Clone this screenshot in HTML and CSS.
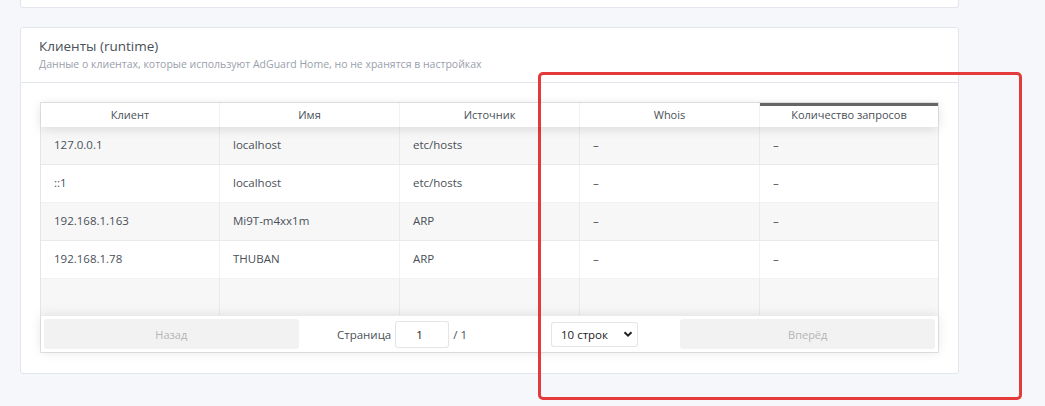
FILE: index.html
```html
<!DOCTYPE html>
<html lang="ru">
<head>
<meta charset="utf-8">
<title>Клиенты (runtime)</title>
<link rel="stylesheet" href="styles.css">
</head>
<body>
<div class="page">
  <div class="card card-top"></div>
  <div class="card">
    <div class="card-header">
      <div class="card-title">Клиенты (runtime)</div>
      <div class="card-subtitle">Данные о клиентах, которые используют AdGuard Home, но не хранятся в настройках</div>
    </div>
    <div class="card-body">
      <div class="rt">
        <div class="rt-thead">
          <div class="th">Клиент</div>
          <div class="th">Имя</div>
          <div class="th">Источник</div>
          <div class="th">Whois</div>
          <div class="th sorted">Количество запросов</div>
        </div>
        <div class="rt-tbody">
          <div class="tr odd"><div class="td">127.0.0.1</div><div class="td">localhost</div><div class="td">etc/hosts</div><div class="td">–</div><div class="td">–</div></div>
          <div class="tr"><div class="td">::1</div><div class="td">localhost</div><div class="td">etc/hosts</div><div class="td">–</div><div class="td">–</div></div>
          <div class="tr odd"><div class="td">192.168.1.163</div><div class="td">Mi9T-m4xx1m</div><div class="td">ARP</div><div class="td">–</div><div class="td">–</div></div>
          <div class="tr"><div class="td">192.168.1.78</div><div class="td">THUBAN</div><div class="td">ARP</div><div class="td">–</div><div class="td">–</div></div>
          <div class="tr odd pad"><div class="td"></div><div class="td"></div><div class="td"></div><div class="td"></div><div class="td"></div></div>
        </div>
        <div class="pagination">
          <div class="pg-side"><button class="pg-btn" disabled>Назад</button></div>
          <div class="pg-center">
            <span class="pg-info">Страница <span class="pg-input">1</span> / 1</span>
            <span class="pg-select">10 строк <svg class="chev" viewBox="0 0 10 10" width="10" height="10"><path d="M1.5 3.2 L5 6.7 L8.5 3.2" fill="none" stroke="#222" stroke-width="2"/></svg></span>
          </div>
          <div class="pg-side"><button class="pg-btn" disabled>Вперёд</button></div>
        </div>
      </div>
    </div>
  </div>
</div>
<div class="highlight"></div>
</body>
</html>
```

FILE: styles.css
```css
html, body {
  margin: 0;
  padding: 0;
}
body {
  background: #f5f7fb;
  font-family: "Open Sans", "Noto Sans", sans-serif;
  color: #495057;
  width: 1045px;
  height: 406px;
  overflow: hidden;
  position: relative;
}
.page {
  width: 939px;
  margin-left: 20px;
  display: flex;
  flex-direction: column;
  gap: 19px;
}
.card {
  background: #fff;
  border: 1px solid #e3e6ec;
  border-radius: 3px;
  box-sizing: border-box;
}
.card-top {
  height: 8px;
  border-top: none;
  border-radius: 0 0 3px 3px;
}
.card-header {
  height: 55px;
  box-sizing: border-box;
  padding: 9px 18px 0;
  border-bottom: 1px solid #e3e6ec;
}
.card-title {
  font-size: 13.5px;
  line-height: 18px;
  color: #495057;
}
.card-subtitle {
  font-size: 10.5px;
  line-height: 16px;
  color: #9aa0ac;
  margin-top: 1px;
}
.card-body {
  padding: 19px 19px 20px;
}
.rt {
  border: 1px solid rgba(0,0,0,0.1);
  display: flex;
  flex-direction: column;
}
.rt-thead, .tr {
  display: grid;
  grid-template-columns: 179px 180px 180px 180px 1fr;
}
.rt-thead {
  height: 24px;
  box-shadow: 0 2px 12px 0 rgba(0,0,0,0.12);
  position: relative;
  z-index: 1;
}
.th {
  font-size: 11px;
  line-height: 24px;
  text-align: center;
  color: #495057;
  border-right: 1px solid rgba(0,0,0,0.05);
}
.th:last-child { border-right: none; }
.th.sorted {
  box-shadow: inset 0 3px 0 0 rgba(0,0,0,0.6);
}
.tr {
  height: 38px;
  border-bottom: 1px solid rgba(0,0,0,0.05);
  box-sizing: border-box;
}
.tr.odd { background: rgba(0,0,0,0.03); }
.tr.pad { height: 36px; border-bottom: none; }
.td {
  font-size: 11.5px;
  line-height: 36px;
  padding-left: 13px;
  color: #495057;
  border-right: 1px solid rgba(0,0,0,0.05);
}
.td:last-child { border-right: none; }
.pagination {
  height: 36px;
  display: grid;
  grid-template-columns: 1fr 1.5fr 1fr;
  align-items: center;
  padding: 0 3px;
  box-shadow: 0 0 12px 0 rgba(0,0,0,0.1);
  border-top: 1px solid rgba(0,0,0,0.08);
  position: relative;
}
.pg-btn {
  display: block;
  width: 100%;
  height: 30px;
  border: none;
  border-radius: 3px;
  background: rgba(0,0,0,0.05);
  color: #b5b5b5;
  font-family: "Open Sans", "Noto Sans", sans-serif;
  font-size: 11px;
}
.pg-center {
  display: flex;
  align-items: center;
  justify-content: center;
  font-size: 11.5px;
}
.pg-info {
  display: flex;
  align-items: center;
  gap: 4px;
  color: #495057;
  margin-left: -4px;
}
.pg-input {
  display: inline-block;
  width: 54px;
  height: 27px;
  box-sizing: border-box;
  border: 1px solid rgba(0,0,0,0.1);
  border-radius: 3px;
  background: #fff;
  line-height: 25px;
  padding-left: 20px;
  color: #222;
}
.pg-select {
  display: inline-flex;
  align-items: center;
  justify-content: space-between;
  width: 87px;
  height: 25px;
  box-sizing: border-box;
  border: 1px solid rgba(0,0,0,0.1);
  border-radius: 3px;
  background: #fff;
  padding: 0 4px 0 9px;
  margin-left: 84px;
  color: #222;
}
.chev { display: block; }
.highlight {
  position: absolute;
  left: 538px;
  top: 72px;
  width: 484px;
  height: 328px;
  box-sizing: border-box;
  border: 3px solid #e53a3a;
  border-radius: 5px;
}
```
